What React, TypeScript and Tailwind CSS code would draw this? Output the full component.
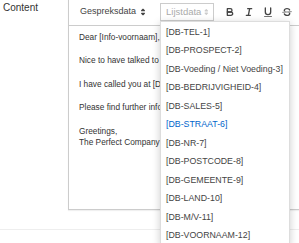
import React from "react";

const items = [
  "[DB-TEL-1]",
  "[DB-PROSPECT-2]",
  "[DB-Voeding / Niet Voeding-3]",
  "[DB-BEDRIJVIGHEID-4]",
  "[DB-SALES-5]",
  "[DB-STRAAT-6]",
  "[DB-NR-7]",
  "[DB-POSTCODE-8]",
  "[DB-GEMEENTE-9]",
  "[DB-LAND-10]",
  "[DB-M/V-11]",
  "[DB-VOORNAAM-12]",
];

function Arrows({ color }: { color: string }) {
  return (
    <svg width="12" height="12" viewBox="0 0 18 18">
      <polygon points="7 11 9 13 11 11 7 11" fill="none" stroke={color} strokeWidth="2" strokeLinejoin="round" />
      <polygon points="7 7 9 5 11 7 7 7" fill="none" stroke={color} strokeWidth="2" strokeLinejoin="round" />
    </svg>
  );
}

function BoldIcon() {
  return (
    <svg width="12" height="12" viewBox="0 0 18 18">
      <path d="M5,4H9.5A2.5,2.5,0,0,1,12,6.5v0A2.5,2.5,0,0,1,9.5,9H5A0,0,0,0,1,5,9V4A0,0,0,0,1,5,4Z" fill="none" stroke="#444" strokeWidth="2" strokeLinejoin="round" />
      <path d="M5,9h5.5A2.5,2.5,0,0,1,13,11.5v0A2.5,2.5,0,0,1,10.5,14H5a0,0,0,0,1,0,0V9A0,0,0,0,1,5,9Z" fill="none" stroke="#444" strokeWidth="2" strokeLinejoin="round" />
    </svg>
  );
}

function ItalicIcon() {
  return (
    <svg width="12" height="12" viewBox="0 0 18 18">
      <line x1="7" x2="13" y1="4" y2="4" stroke="#444" strokeWidth="2" strokeLinecap="round" />
      <line x1="5" x2="11" y1="14" y2="14" stroke="#444" strokeWidth="2" strokeLinecap="round" />
      <line x1="8" x2="10" y1="14" y2="4" stroke="#444" strokeWidth="2" strokeLinecap="round" />
    </svg>
  );
}

function UnderlineIcon() {
  return (
    <svg width="12" height="12" viewBox="0 0 18 18">
      <path d="M5,3V9a4.012,4.012,0,0,0,4,4H9a4.012,4.012,0,0,0,4-4V3" fill="none" stroke="#444" strokeWidth="2" strokeLinecap="round" strokeLinejoin="round" />
      <rect x="3" y="15" width="12" height="1" rx="0.5" ry="0.5" fill="#444" />
    </svg>
  );
}

function StrikeIcon() {
  return (
    <svg width="12" height="12" viewBox="0 0 18 18">
      <line x1="15.5" x2="2.5" y1="8.5" y2="9.5" stroke="#444" strokeWidth="1" strokeLinecap="round" />
      <path d="M9.007,8C6.542,7.791,6,7.519,6,6.5,6,5.792,7.283,5,9,5c1.571,0,2.765.679,2.969,1.309a1,1,0,0,0,1.9-.617C13.356,4.106,11.354,3,9,3,6.2,3,4,4.538,4,6.5a3.2,3.2,0,0,0,.5,1.843Z" fill="#444" />
      <path d="M8.984,10C11.457,10.208,12,10.479,12,11.5c0,0.708-1.283,1.5-3,1.5-1.571,0-2.765-.679-2.969-1.309a1,1,0,1,0-1.9.617C4.644,13.894,6.646,15,9,15c2.8,0,5-1.538,5-3.5a3.2,3.2,0,0,0-.5-1.843Z" fill="#444" />
    </svg>
  );
}

export default function App() {
  return (
    <div className="w-[299px] h-[243px] overflow-hidden bg-white font-['Liberation_Sans',Arial,sans-serif]">
      <div className="flex">
        <div className="w-[68px] shrink-0 pl-[3px] pt-[2px] text-[10px] leading-[12px] text-[#333]">Content</div>
        <div className="w-[260px] shrink-0 -mt-[2px] border border-[#ccc] shadow-[0_1px_1px_rgba(0,0,0,0.06)]">
          <div className="flex h-[27px] items-center border-b border-[#ccc] pl-[5px]">
            <div className="flex h-[17px] w-[76px] items-center justify-between pl-[6px] pr-[1px] text-[9px] text-[#444]">
              <span>Gespreksdata</span>
              <Arrows color="#444" />
            </div>
            <div className="relative ml-[10px]">
              <div className="flex h-[18px] w-[54px] items-center justify-between border border-[#ccc] pl-[5px] pr-px text-[9.5px] text-[#aaa]">
                <span>Lijstdata</span>
                <Arrows color="#ccc" />
              </div>
              <div className="absolute left-0 top-full z-10 w-[130px] border border-[#ddd] bg-white pl-[5px] pt-[1px] shadow-[0_2px_8px_rgba(0,0,0,0.2)]">
                {items.map((t) => (
                  <div
                    key={t}
                    className={`whitespace-nowrap text-[8.8px] leading-[18.45px] ${t === "[DB-STRAAT-6]" ? "text-[#06c]" : "text-[#444]"}`}
                  >
                    {t}
                  </div>
                ))}
              </div>
            </div>
            <div className="ml-[6px] flex">
              <div className="flex h-[17px] w-[19px] items-center justify-center"><BoldIcon /></div>
              <div className="flex h-[17px] w-[19px] items-center justify-center"><ItalicIcon /></div>
              <div className="flex h-[17px] w-[19px] items-center justify-center"><UnderlineIcon /></div>
              <div className="flex h-[17px] w-[19px] items-center justify-center"><StrikeIcon /></div>
            </div>
          </div>
          <div className="h-[183px] pl-[10px] pt-[6px] text-[8.3px] leading-[11.7px] text-[#333]">
            <p className="whitespace-nowrap">Dear [Info-voornaam],</p>
            <p className="h-[11.7px]"></p>
            <p className="whitespace-nowrap">Nice to have talked to you about our new product range.</p>
            <p className="h-[11.7px]"></p>
            <p className="whitespace-nowrap">I have called you at [DB-TEL-1] to plan our meeting.</p>
            <p className="h-[11.7px]"></p>
            <p className="whitespace-nowrap">Please find further information in the attachment.</p>
            <p className="h-[11.7px]"></p>
            <p className="whitespace-nowrap">Greetings,</p>
            <p className="whitespace-nowrap">The Perfect Company</p>
          </div>
        </div>
      </div>
      <div className="mt-[19px] border-t border-[#eee]"></div>
    </div>
  );
}
